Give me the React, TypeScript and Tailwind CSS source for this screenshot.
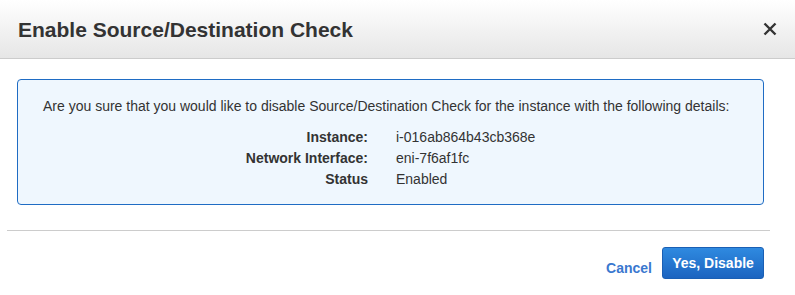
const details = [
  { label: "Instance:", value: "i-016ab864b43cb368e" },
  { label: "Network Interface:", value: "eni-7f6af1fc" },
  { label: "Status", value: "Enabled" },
];

const CloseIcon = () => (
  <svg width="14" height="14" viewBox="0 0 14 14" className="text-[#333]">
    <path d="M1.5 1.5 L12.5 12.5 M12.5 1.5 L1.5 12.5" stroke="currentColor" strokeWidth="2.4" />
  </svg>
);

const App = () => {
  return (
    <div className="h-[295px] w-[795px] bg-white font-['Liberation_Sans',Arial,sans-serif] text-[#333]">
      <div className="flex h-[59px] items-center justify-between border-b border-[#cccccc] bg-gradient-to-b from-[#ffffff] to-[#e6e6e6] pl-[18px] pr-[13px]">
        <h2 className="pt-[2px] text-[21px] font-bold text-[#333]">Enable Source/Destination Check</h2>
        <button className="flex h-6 w-6 items-center justify-center">
          <CloseIcon />
        </button>
      </div>

      <div className="pl-[17px] pr-[31px] pt-[20px]">
        <div className="rounded-[4px] border border-[#1f6cc4] bg-[#eff7fe] pl-[25px] pr-4 pt-[16px] pb-[14px] text-[14px]">
          <p className="leading-[20px] text-[#333]">
            Are you sure that you would like to disable Source/Destination Check for the instance with the following details:
          </p>
          <div className="mt-[11px] flex flex-col">
            {details.map((d) => (
              <div key={d.label} className="flex h-[21px] items-center">
                <span className="w-[325px] text-right font-bold text-[#333]">{d.label}</span>
                <span className="ml-[28px] text-[#333]">{d.value}</span>
              </div>
            ))}
          </div>
        </div>
      </div>

      <div className="mx-[7px] mr-[25px] mt-[25px] border-t border-[#cccccc]" />

      <div className="flex items-center justify-end gap-[10px] pr-[31px] pt-[16px]">
        <button className="mt-[10px] text-[14px] font-bold text-[#3a78cf]">Cancel</button>
        <button className="h-[32px] w-[102px] rounded-[3px] border border-[#1a5fb4] bg-gradient-to-b from-[#2f8ae0] to-[#1c64c0] text-[14px] font-bold text-white">
          Yes, Disable
        </button>
      </div>
    </div>
  );
};

export default App;
